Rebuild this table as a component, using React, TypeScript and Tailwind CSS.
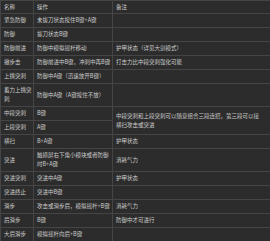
import React from 'react';

type Row = {
  name: React.ReactNode;
  op: React.ReactNode;
  note?: React.ReactNode;
  noteRowSpan?: number;
  skipNote?: boolean; // covered by a rowspan above
  tall?: boolean;
};

const rows: Row[] = [
  { name: '紧急防御', op: '未拔刀状态按住B键+A键', note: '' },
  { name: '防御', op: '拔刀状态B键', note: '' },
  { name: '防御前进', op: '防御中模拟摇杆移动', note: '护甲状态（详见大剑模式）' },
  { name: '撤步击', op: '防御前进中B键，冲刺中再B键', note: '打击力比中段突刺强化可能' },
  { name: '上挑突刺', op: '防御中A键（迅速放开B键）', note: '' },
  { name: <>蓄力上挑突<br />刺</>, op: '防御中A键（A键按住不放）', note: '', tall: true },
  {
    name: '中段突刺',
    op: 'B键',
    note: <>中段突刺和上段突刺可以随意组合三段连招，第三段可以接<br />横扫攻击或突进</>,
    noteRowSpan: 2,
  },
  { name: '上段突刺', op: 'A键', skipNote: true },
  { name: '横扫', op: 'B+A键', note: '护甲状态' },
  { name: '突进', op: <>触摸屏右下角小模块或者防御<br />时B+A键</>, note: '消耗气力', tall: true },
  { name: '突进突刺', op: '突进中A键', note: '护甲状态' },
  { name: '突进终止', op: '突进中B键', note: '' },
  { name: '滑步', op: '攻击或滑步后，模拟摇杆+B键', note: '消耗气力' },
  { name: '后滑步', op: 'B键', note: '防御中才可进行' },
  { name: '大后滑步', op: '模拟摇杆向后+B键', note: '' },
];

const cell = 'border border-[#454545] pl-[3px] pr-[1px] align-middle leading-[9px]';

const App: React.FC = () => {
  return (
    <div className="w-[270px] h-[241px] overflow-hidden bg-[#2c2c2c] text-[#cdcdcd] text-[5.5px] font-['Noto_Sans_CJK_SC','Noto_Sans',sans-serif]">
      <table className="w-[270px] table-fixed border-collapse">
        <colgroup>
          <col className="w-[33px]" />
          <col className="w-[79px]" />
          <col className="w-[158px]" />
        </colgroup>
        <thead>
          <tr className="h-[13px]">
            <th className={`${cell} text-left font-normal`}>名称</th>
            <th className={`${cell} text-left font-normal`}>操作</th>
            <th className={`${cell} text-left font-normal`}>备注</th>
          </tr>
        </thead>
        <tbody>
          {rows.map((row, i) => (
            <tr key={i} className={row.tall ? 'h-[23px]' : 'h-[14px]'}>
              <td className={cell}>{row.name}</td>
              <td className={cell}>{row.op}</td>
              {!row.skipNote && (
                <td className={`${cell} whitespace-nowrap`} rowSpan={row.noteRowSpan}>
                  {row.note}
                </td>
              )}
            </tr>
          ))}
        </tbody>
      </table>
    </div>
  );
};

export default App;
